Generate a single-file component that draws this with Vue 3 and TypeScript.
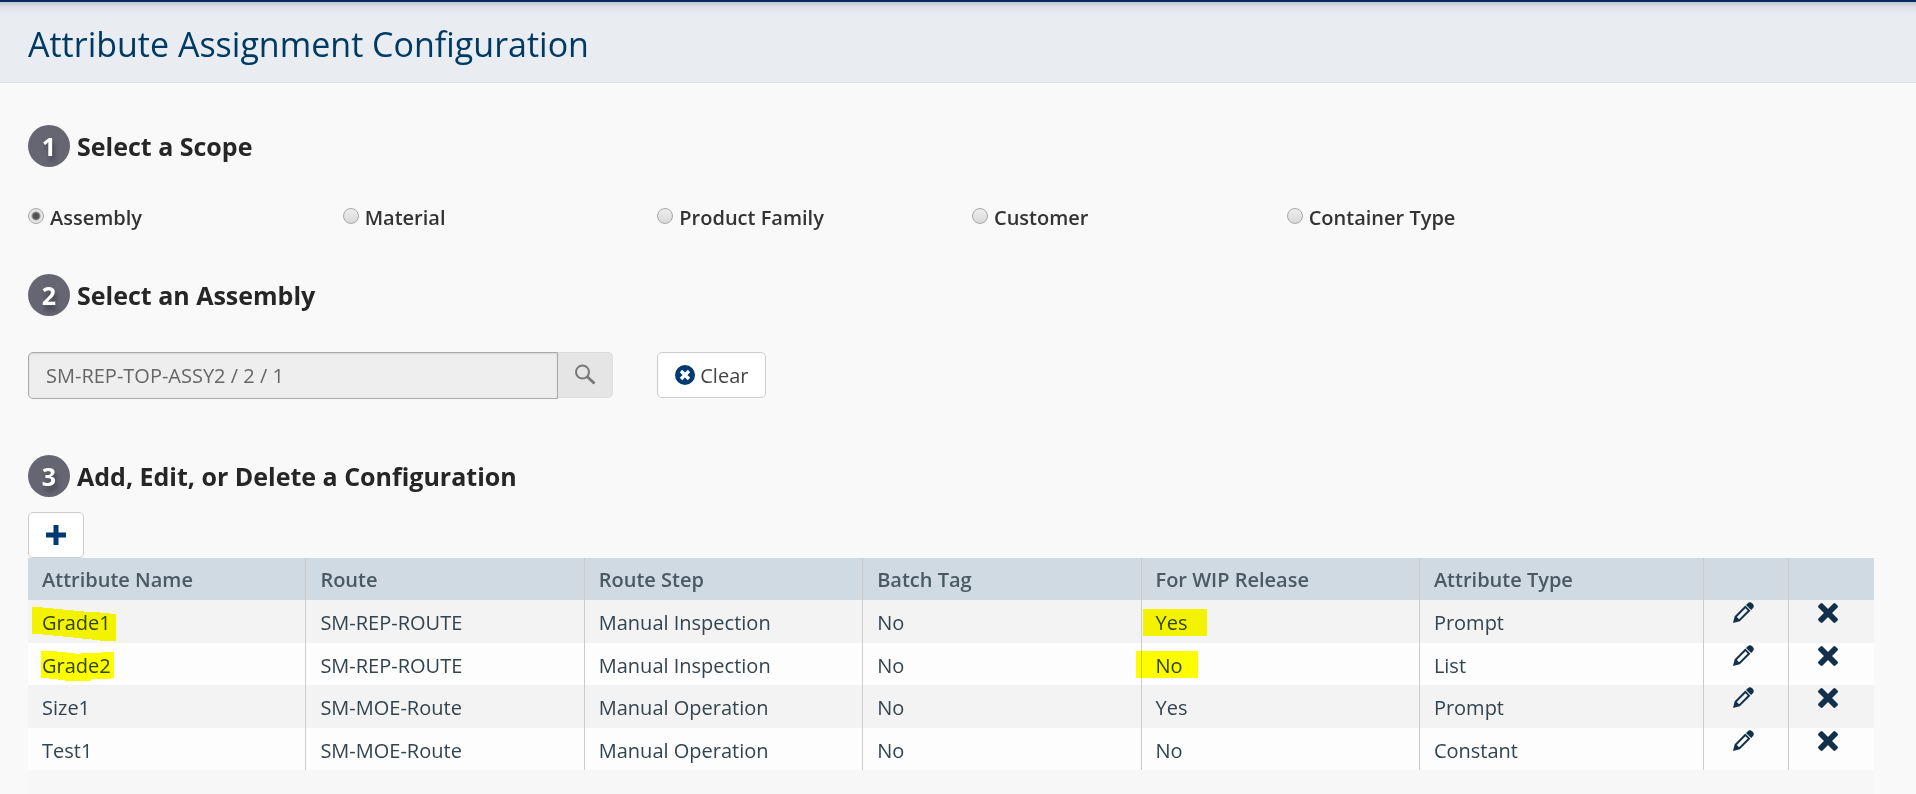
<script setup lang="ts">
import { ref } from 'vue'

interface Mark {
  width: number
  height: number
  kind: string
  points: string
}

interface Row {
  name: string
  route: string
  step: string
  batch: string
  wip: string
  type: string
  nameMark?: Mark
  wipMark?: Mark
}

const scopes = ['Assembly', 'Material', 'Product Family', 'Customer', 'Container Type']
const scope = ref('Assembly')
const assembly = ref('SM-REP-TOP-ASSY2 / 2 / 1')

const columns = ['Attribute Name', 'Route', 'Route Step', 'Batch Tag', 'For WIP Release', 'Attribute Type']

const rows: Row[] = [
  {
    name: 'Grade1', route: 'SM-REP-ROUTE', step: 'Manual Inspection', batch: 'No', wip: 'Yes', type: 'Prompt',
    nameMark: { width: 84, height: 34, kind: 'mark-a', points: '0,0 11,0 11,1 21,1 21,2 31,2 31,3 41,3 41,4 52,4 52,5 68,5 68,6 78,6 78,7 84,7 84,34 68,34 68,33 60,33 60,32 50,32 50,31 41,31 41,30 31,30 31,29 21,29 21,28 11,28 11,27 0,27' },
    wipMark: { width: 64, height: 27, kind: 'mark-c', points: '0,0 64,0 64,27 0,27' },
  },
  {
    name: 'Grade2', route: 'SM-REP-ROUTE', step: 'Manual Inspection', batch: 'No', wip: 'No', type: 'List',
    nameMark: { width: 73, height: 30, kind: 'mark-b', points: '0,0 16,0 16,1 26,1 26,2 34,2 34,3 40,3 40,2 60,2 60,1 73,1 73,27 70,27 70,28 50,28 50,30 24,30 24,29 17,29 17,28 8,28 8,27 0,27' },
    wipMark: { width: 62, height: 27, kind: 'mark-d', points: '0,0 62,0 62,27 0,27' },
  },
  { name: 'Size1', route: 'SM-MOE-Route', step: 'Manual Operation', batch: 'No', wip: 'Yes', type: 'Prompt' },
  { name: 'Test1', route: 'SM-MOE-Route', step: 'Manual Operation', batch: 'No', wip: 'No', type: 'Constant' },
]
</script>

<template>
  <div class="page">
    <header class="title-bar">
      <h1>Attribute Assignment Configuration</h1>
    </header>

    <main class="content">
      <h2 class="step"><span class="badge">1</span>Select a Scope</h2>
      <div class="scopes" role="radiogroup" aria-label="Scope">
        <label v-for="s in scopes" :key="s" class="scope">
          <input v-model="scope" type="radio" name="scope" :value="s" />
          <span>{{ s }}</span>
        </label>
      </div>

      <h2 class="step"><span class="badge">2</span>Select an Assembly</h2>
      <div class="picker">
        <div class="lookup">
          <input v-model="assembly" class="lookup-text" type="text" aria-label="Assembly" readonly />
          <button class="lookup-button" type="button" aria-label="Search">
            <svg width="22" height="22" viewBox="0 0 22 22" fill="none" stroke="#777">
              <circle cx="8.5" cy="8" r="6.5" stroke-width="2" />
              <path d="M13 12.5L20.5 19.5" stroke-width="2.8" />
            </svg>
          </button>
        </div>
        <button class="button clear" type="button">
          <svg width="20" height="20" viewBox="0 0 20 20">
            <circle cx="10" cy="10" r="10" fill="#003a70" />
            <path d="M6 6L14 14M14 6L6 14" stroke="#fff" stroke-width="3.4" />
          </svg>
          <span>Clear</span>
        </button>
      </div>

      <h2 class="step step-table"><span class="badge">3</span>Add, Edit, or Delete a Configuration</h2>
      <button class="button add" type="button" aria-label="Add">
        <svg width="20" height="20" viewBox="0 0 20 20">
          <path d="M10 0V20M0 10H20" stroke="#003a70" stroke-width="5" />
        </svg>
      </button>

      <div class="grid">
        <table>
          <colgroup>
            <col v-for="c in 5" :key="c" class="col-text" />
            <col />
            <col class="col-action" />
            <col class="col-action" />
          </colgroup>
          <thead>
            <tr>
              <th v-for="c in columns" :key="c" scope="col">{{ c }}</th>
              <th scope="col" aria-label="Edit"></th>
              <th scope="col" aria-label="Delete"></th>
            </tr>
          </thead>
          <tbody>
            <tr v-for="r in rows" :key="r.name">
              <td>
                {{ r.name }}
                <svg v-if="r.nameMark" class="mark" :class="r.nameMark.kind" :width="r.nameMark.width" :height="r.nameMark.height">
                  <polygon :points="r.nameMark.points" fill="#ff0" />
                </svg>
              </td>
              <td>{{ r.route }}</td>
              <td>{{ r.step }}</td>
              <td>{{ r.batch }}</td>
              <td>
                {{ r.wip }}
                <svg v-if="r.wipMark" class="mark" :class="r.wipMark.kind" :width="r.wipMark.width" :height="r.wipMark.height">
                  <polygon :points="r.wipMark.points" fill="#ff0" />
                </svg>
              </td>
              <td>{{ r.type }}</td>
              <td class="action">
                <button type="button" :aria-label="`Edit ${r.name}`">
                  <svg width="20" height="20" viewBox="0 0 20 20">
                    <g transform="translate(0 20) rotate(-45)" fill="#12304a">
                      <path fill-rule="evenodd" d="M0 0L6 -3.6H21V3.6H6ZM7 -1.6V1.6H19.2V-1.6Z" />
                      <path d="M22 -3.6H24.5Q27.5 -3.6 27.5 0Q27.5 3.6 24.5 3.6H22Z" />
                    </g>
                  </svg>
                </button>
              </td>
              <td class="action">
                <button type="button" :aria-label="`Delete ${r.name}`">
                  <svg width="20" height="20" viewBox="0 0 20 20" fill="#12304a">
                    <rect x="-2" y="7.1" width="24" height="5.8" rx="1.4" transform="rotate(45 10 10)" />
                    <rect x="-2" y="7.1" width="24" height="5.8" rx="1.4" transform="rotate(-45 10 10)" />
                  </svg>
                </button>
              </td>
            </tr>
          </tbody>
        </table>
      </div>
    </main>
  </div>
</template>

<style>
body {
  margin: 0;
  background: #f9f9f9;
}
</style>

<style scoped>
.page {
  box-sizing: border-box;
  display: flex;
  flex-direction: column;
  min-height: 100vh;
  font-family: "Open Sans", "Noto Sans", sans-serif;
  font-size: 20px;
  color: #333;
}
.title-bar {
  box-sizing: border-box;
  height: 83px;
  padding: 0 28px;
  border-top: 2px solid #002c61;
  border-bottom: 1px solid #d9dfe8;
  background: linear-gradient(#c3c5cf, #dde1e7 5px, #e9edf2 12px);
}
h1 {
  margin: 0;
  font-size: 34px;
  font-weight: 400;
  line-height: 84px;
  color: #003a63;
}
.content {
  display: flex;
  flex: 1;
  flex-direction: column;
  align-items: flex-start;
  padding: 42px 0 0 28px;
}
.step {
  display: flex;
  align-items: center;
  gap: 7px;
  margin: 0;
  font-size: 25px;
  font-weight: 700;
  line-height: 42px;
  color: #262626;
}
.badge {
  width: 42px;
  height: 42px;
  border-radius: 50%;
  background: #666673;
  color: #fff;
  text-align: center;
  text-shadow: 2px 5px 5px rgba(0, 0, 0, .35);
}
.scopes {
  display: grid;
  grid-template-columns: repeat(6, 1fr);
  width: 100%;
  padding: 37px 0 42px;
}
.scope {
  display: flex;
  gap: 6px;
  font-weight: 600;
  line-height: 28px;
}
.scope input {
  box-sizing: border-box;
  width: 16px;
  height: 16px;
  margin: 4px 0 0;
  appearance: none;
  border: 1px solid #a9a9a9;
  border-radius: 50%;
  background: linear-gradient(#eee, #d9d9d9);
}
.scope input:checked {
  background: radial-gradient(circle, #555 0 3px, #e6e6e6 5px);
}
.picker {
  display: flex;
  width: 100%;
  padding: 36px 0 56px;
}
.lookup {
  display: flex;
  width: 31%;
  margin-right: 44px;
}
.lookup-text {
  box-sizing: border-box;
  flex: 1;
  min-width: 0;
  height: 47px;
  padding: 0 17px;
  border: 1px solid #aaa;
  border-radius: 5px 0 0 5px;
  background: #eee;
  box-shadow: inset 0 1px 2px rgba(0, 0, 0, .1);
  font: inherit;
  color: #666;
}
.lookup-button {
  display: flex;
  align-items: center;
  justify-content: center;
  width: 55px;
  height: 46px;
  padding: 0;
  border: 1px solid #ddd;
  border-left: 0;
  border-radius: 0 5px 5px 0;
  background: #e5e5e5;
}
.button {
  display: flex;
  align-items: center;
  gap: 5px;
  box-sizing: border-box;
  height: 46px;
  padding: 0 17px;
  border: 1px solid #ccc;
  border-radius: 5px;
  background: #fff;
  font: inherit;
  color: #444;
}
.step-table {
  padding-bottom: 15px;
}
.grid {
  align-self: stretch;
  flex: 1;
  margin-right: 42px;
  padding-bottom: 24px;
  background: #f7f7f7;
}
table {
  width: 100%;
  table-layout: fixed;
  border-spacing: 0;
}
.col-text {
  width: 15.08%;
}
.col-action {
  width: 4.6%;
}
th,
td {
  position: relative;
  box-sizing: border-box;
  height: 42px;
  padding: 2px 14px 0;
  border-right: 1px solid #ccc;
  text-align: left;
  line-height: 28px;
}
th:last-child,
td:last-child {
  border-right: 0;
}
th {
  background: #cfdae2;
  font-weight: 600;
  color: #4a5963;
}
td {
  padding-top: 3px;
  background: #fdfdfd;
  color: #33444f;
}
tbody tr:nth-child(odd) td {
  height: 43px;
  background: #f3f3f3;
}
td.action {
  padding: 3px 7px 0 0;
  text-align: center;
  vertical-align: top;
}
.action button {
  display: block;
  width: 20px;
  height: 20px;
  margin: 0 auto;
  padding: 0;
  border: 0;
  background: none;
}
.action svg {
  display: block;
  overflow: visible;
}
.mark {
  position: absolute;
  z-index: 1;
  mix-blend-mode: multiply;
  pointer-events: none;
}
.mark-a {
  top: 7px;
  left: 4px;
}
.mark-b {
  top: 8px;
  left: 13px;
}
.mark-c {
  top: 9px;
  left: 1px;
}
.mark-d {
  top: 8px;
  left: -6px;
}
</style>
